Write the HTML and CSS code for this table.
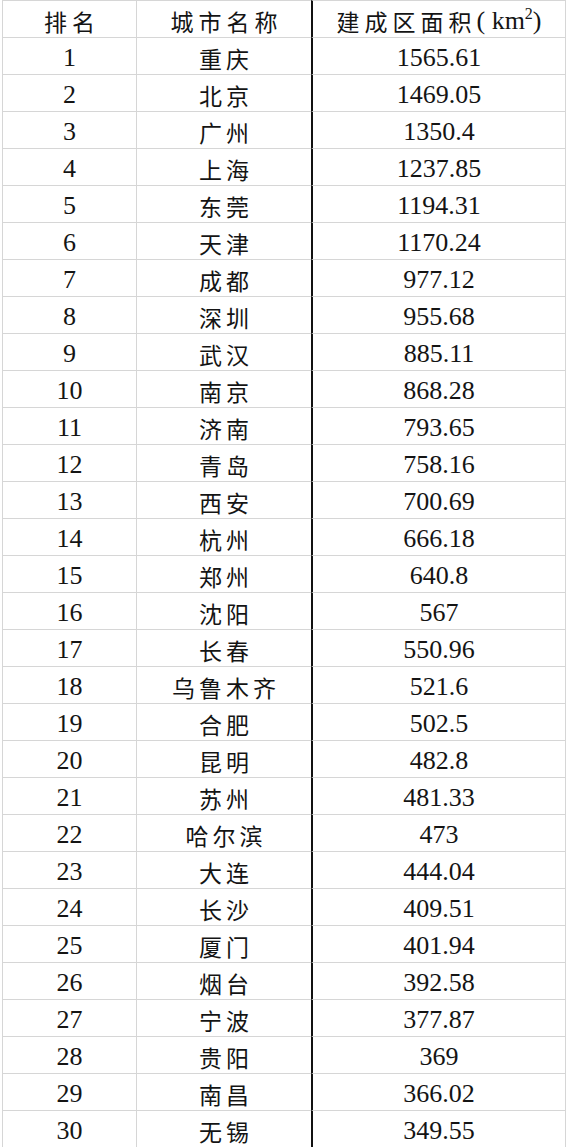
FILE: index.html
```html
<!DOCTYPE html>
<html lang="zh-CN">
<head>
<meta charset="utf-8">
<title>建成区面积排名</title>
<link rel="stylesheet" href="styles.css">
</head>
<body>
<div class="sheet">
  <div class="row head">
    <div class="cell c1"><span class="zh">排名</span></div>
    <div class="cell c2"><span class="zh">城市名称</span></div>
    <div class="cell c3"><span class="zh">建成区面积</span><span class="num unit">( km<sup>2</sup>)</span></div>
  </div>
  <div class="row"><div class="cell c1"><span class="num">1</span></div><div class="cell c2"><span class="zh">重庆</span></div><div class="cell c3"><span class="num">1565.61</span></div></div>
  <div class="row"><div class="cell c1"><span class="num">2</span></div><div class="cell c2"><span class="zh">北京</span></div><div class="cell c3"><span class="num">1469.05</span></div></div>
  <div class="row"><div class="cell c1"><span class="num">3</span></div><div class="cell c2"><span class="zh">广州</span></div><div class="cell c3"><span class="num">1350.4</span></div></div>
  <div class="row"><div class="cell c1"><span class="num">4</span></div><div class="cell c2"><span class="zh">上海</span></div><div class="cell c3"><span class="num">1237.85</span></div></div>
  <div class="row"><div class="cell c1"><span class="num">5</span></div><div class="cell c2"><span class="zh">东莞</span></div><div class="cell c3"><span class="num">1194.31</span></div></div>
  <div class="row"><div class="cell c1"><span class="num">6</span></div><div class="cell c2"><span class="zh">天津</span></div><div class="cell c3"><span class="num">1170.24</span></div></div>
  <div class="row"><div class="cell c1"><span class="num">7</span></div><div class="cell c2"><span class="zh">成都</span></div><div class="cell c3"><span class="num">977.12</span></div></div>
  <div class="row"><div class="cell c1"><span class="num">8</span></div><div class="cell c2"><span class="zh">深圳</span></div><div class="cell c3"><span class="num">955.68</span></div></div>
  <div class="row"><div class="cell c1"><span class="num">9</span></div><div class="cell c2"><span class="zh">武汉</span></div><div class="cell c3"><span class="num">885.11</span></div></div>
  <div class="row"><div class="cell c1"><span class="num">10</span></div><div class="cell c2"><span class="zh">南京</span></div><div class="cell c3"><span class="num">868.28</span></div></div>
  <div class="row"><div class="cell c1"><span class="num">11</span></div><div class="cell c2"><span class="zh">济南</span></div><div class="cell c3"><span class="num">793.65</span></div></div>
  <div class="row"><div class="cell c1"><span class="num">12</span></div><div class="cell c2"><span class="zh">青岛</span></div><div class="cell c3"><span class="num">758.16</span></div></div>
  <div class="row"><div class="cell c1"><span class="num">13</span></div><div class="cell c2"><span class="zh">西安</span></div><div class="cell c3"><span class="num">700.69</span></div></div>
  <div class="row"><div class="cell c1"><span class="num">14</span></div><div class="cell c2"><span class="zh">杭州</span></div><div class="cell c3"><span class="num">666.18</span></div></div>
  <div class="row"><div class="cell c1"><span class="num">15</span></div><div class="cell c2"><span class="zh">郑州</span></div><div class="cell c3"><span class="num">640.8</span></div></div>
  <div class="row"><div class="cell c1"><span class="num">16</span></div><div class="cell c2"><span class="zh">沈阳</span></div><div class="cell c3"><span class="num">567</span></div></div>
  <div class="row"><div class="cell c1"><span class="num">17</span></div><div class="cell c2"><span class="zh">长春</span></div><div class="cell c3"><span class="num">550.96</span></div></div>
  <div class="row"><div class="cell c1"><span class="num">18</span></div><div class="cell c2"><span class="zh">乌鲁木齐</span></div><div class="cell c3"><span class="num">521.6</span></div></div>
  <div class="row"><div class="cell c1"><span class="num">19</span></div><div class="cell c2"><span class="zh">合肥</span></div><div class="cell c3"><span class="num">502.5</span></div></div>
  <div class="row"><div class="cell c1"><span class="num">20</span></div><div class="cell c2"><span class="zh">昆明</span></div><div class="cell c3"><span class="num">482.8</span></div></div>
  <div class="row"><div class="cell c1"><span class="num">21</span></div><div class="cell c2"><span class="zh">苏州</span></div><div class="cell c3"><span class="num">481.33</span></div></div>
  <div class="row"><div class="cell c1"><span class="num">22</span></div><div class="cell c2"><span class="zh">哈尔滨</span></div><div class="cell c3"><span class="num">473</span></div></div>
  <div class="row"><div class="cell c1"><span class="num">23</span></div><div class="cell c2"><span class="zh">大连</span></div><div class="cell c3"><span class="num">444.04</span></div></div>
  <div class="row"><div class="cell c1"><span class="num">24</span></div><div class="cell c2"><span class="zh">长沙</span></div><div class="cell c3"><span class="num">409.51</span></div></div>
  <div class="row"><div class="cell c1"><span class="num">25</span></div><div class="cell c2"><span class="zh">厦门</span></div><div class="cell c3"><span class="num">401.94</span></div></div>
  <div class="row"><div class="cell c1"><span class="num">26</span></div><div class="cell c2"><span class="zh">烟台</span></div><div class="cell c3"><span class="num">392.58</span></div></div>
  <div class="row"><div class="cell c1"><span class="num">27</span></div><div class="cell c2"><span class="zh">宁波</span></div><div class="cell c3"><span class="num">377.87</span></div></div>
  <div class="row"><div class="cell c1"><span class="num">28</span></div><div class="cell c2"><span class="zh">贵阳</span></div><div class="cell c3"><span class="num">369</span></div></div>
  <div class="row"><div class="cell c1"><span class="num">29</span></div><div class="cell c2"><span class="zh">南昌</span></div><div class="cell c3"><span class="num">366.02</span></div></div>
  <div class="row"><div class="cell c1"><span class="num">30</span></div><div class="cell c2"><span class="zh">无锡</span></div><div class="cell c3"><span class="num">349.55</span></div></div>
</div>
</body>
</html>
```

FILE: styles.css
```css
html, body {
  margin: 0;
  padding: 0;
  background: #ffffff;
}

.sheet {
  width: 566px;
  padding-left: 2px;
  box-sizing: border-box;
  color: #141414;
}

.row {
  display: grid;
  grid-template-columns: 134px 175px 255px;
  height: 37px;
}

.cell {
  box-sizing: border-box;
  height: 37px;
  border-top: 1px solid #d6d6d6;
  border-left: 1px solid #d6d6d6;
  display: flex;
  align-items: center;
  justify-content: center;
  padding-top: 3px;
  white-space: nowrap;
}

.c3 {
  border-left: 2px solid #111111;
  border-right: 1px solid #d6d6d6;
}

.num {
  font-family: "Liberation Serif", Tinos, "Times New Roman", "DejaVu Serif", serif;
  font-size: 26px;
  font-weight: 400;
}

.zh {
  font-family: "Noto Sans CJK SC", "Noto Sans", sans-serif;
  font-size: 23px;
  letter-spacing: 4px;
  padding-left: 4px;
  font-weight: 400;
}

.head .zh {
  letter-spacing: 5px;
  padding-left: 5px;
}

.head .c3 .zh {
  padding-left: 0;
}

.unit {
  font-size: 26px;
  letter-spacing: 0;
}

.unit sup {
  font-size: 16px;
  vertical-align: 10px;
  line-height: 0;
}
```
